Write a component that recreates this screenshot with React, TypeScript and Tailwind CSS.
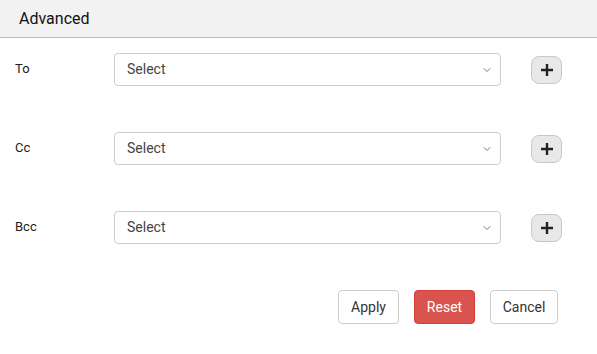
import { ChevronDown } from "lucide-react"

const fields = ["To", "Cc", "Bcc"]

function PlusIcon() {
  return (
    <svg width="14" height="14" viewBox="0 0 14 14" fill="none">
      <path d="M7 1v12M1 7h12" stroke="#222" strokeWidth="2.4" />
    </svg>
  )
}

export default function App() {
  return (
    <div className="w-[597px] h-[354px] bg-white font-['Roboto',sans-serif] text-[#333]">
      <div className="h-[38px] bg-[#f2f2f2] border-b border-[#b8b8b8] flex items-center px-[19px]">
        <span className="text-[16px] text-[#111]">Advanced</span>
      </div>

      <div className="pt-[15px] flex flex-col gap-[46px]">
        {fields.map((f) => (
          <div key={f} className="flex items-start h-[33px]">
            <div className="w-[114px] pl-[15px] pt-[6px] text-[13px] text-[#222]">{f}</div>
            <div className="w-[387px] h-[33px] border border-[#ccc] rounded-[4px] flex items-center justify-between pl-[12px] pr-[7px]">
              <span className="text-[14px] text-[#444]">Select</span>
              <ChevronDown className="w-[12px] h-[12px] text-[#666]" strokeWidth={1.75} />
            </div>
            <button className="ml-[30px] mt-[3px] w-[31px] h-[28px] rounded-[8px] bg-[#e8e8e8] border border-[#c8c8c8] flex items-center justify-center">
              <PlusIcon />
            </button>
          </div>
        ))}
      </div>

      <div className="flex justify-end gap-[15px] pr-[39px] mt-[46px]">
        <button className="h-[34px] w-[61px] border border-[#ccc] rounded-[4px] bg-white text-[14px] text-[#333]">
          Apply
        </button>
        <button className="h-[34px] w-[61px] rounded-[4px] bg-[#d9534f] border border-[#d43f3a] text-[14px] text-white">
          Reset
        </button>
        <button className="h-[34px] w-[68px] border border-[#ccc] rounded-[4px] bg-white text-[14px] text-[#333]">
          Cancel
        </button>
      </div>
    </div>
  )
}
